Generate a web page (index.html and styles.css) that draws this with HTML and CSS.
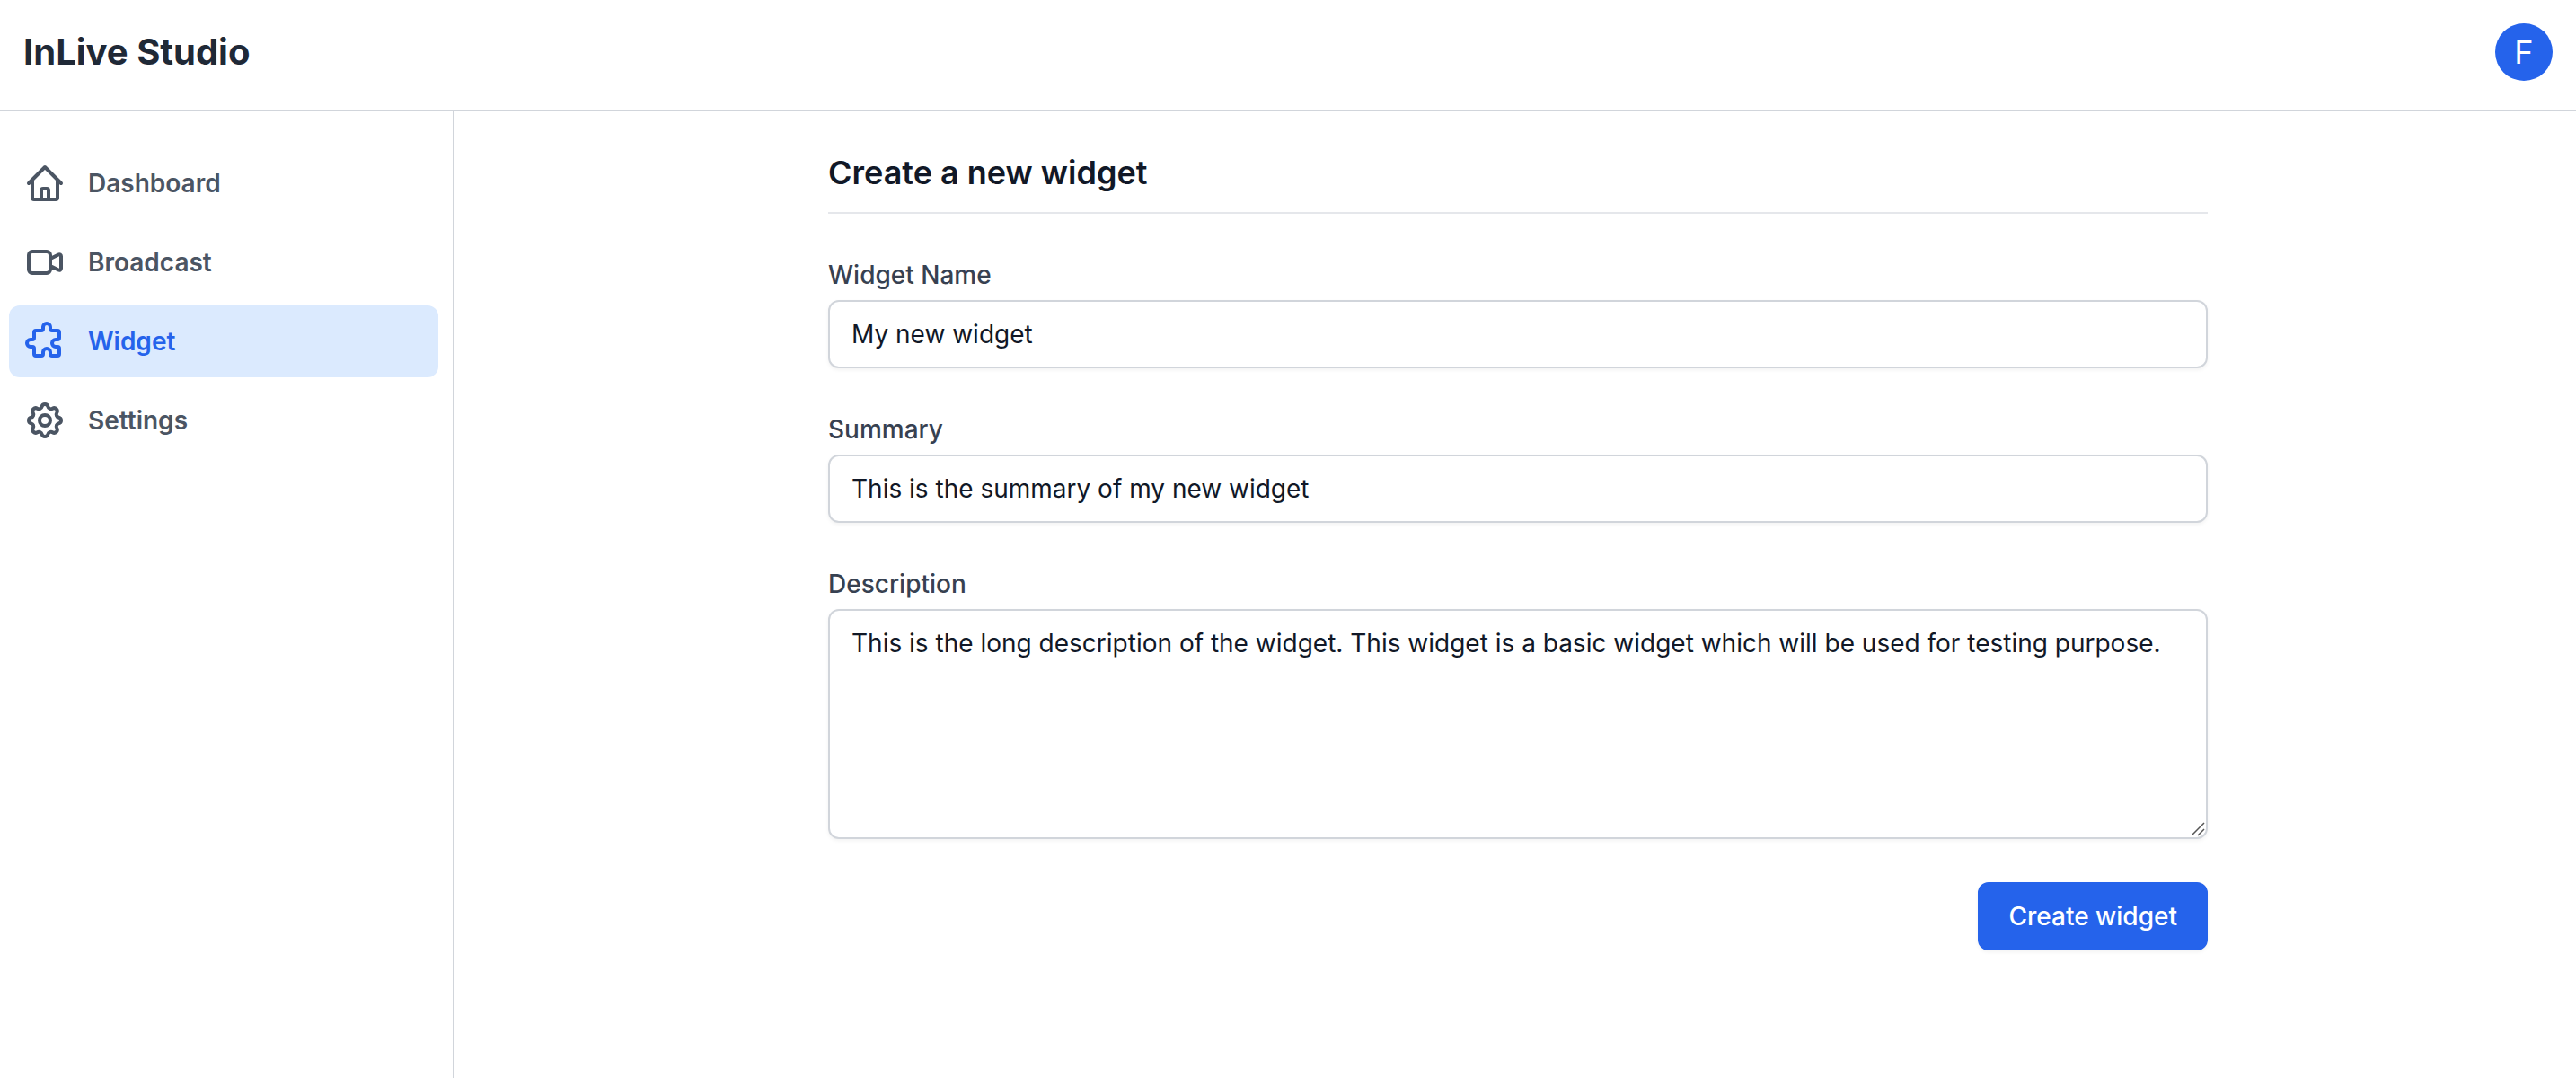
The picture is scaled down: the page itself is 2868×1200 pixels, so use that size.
FILE: index.html
```html
<!DOCTYPE html>
<html lang="en">
<head>
  <meta charset="utf-8">
  <meta name="viewport" content="width=device-width, initial-scale=1">
  <title>InLive Studio</title>
  <link rel="stylesheet" href="styles.css">
</head>
<body>
  <header class="topbar">
    <h1 class="brand">InLive Studio</h1>
    <button class="avatar" type="button" aria-label="Account menu">F</button>
  </header>
  <div class="layout">
    <nav class="sidebar" aria-label="Main">
      <a class="nav-item" href="#dashboard">
        <svg class="icon" viewBox="0 0 24 24" aria-hidden="true"><path d="M3 12l2-2m0 0l7-7 7 7M5 10v10a1 1 0 001 1h3m10-11l2 2m-2-2v10a1 1 0 01-1 1h-3m-6 0a1 1 0 001-1v-4a1 1 0 011-1h2a1 1 0 011 1v4a1 1 0 001 1m-6 0h6"/></svg>
        Dashboard
      </a>
      <a class="nav-item" href="#broadcast">
        <svg class="icon" viewBox="0 0 24 24" aria-hidden="true"><path d="M15 10l4.553-2.276A1 1 0 0121 8.618v6.764a1 1 0 01-1.447.894L15 14M5 18h8a2 2 0 002-2V8a2 2 0 00-2-2H5a2 2 0 00-2 2v8a2 2 0 002 2z"/></svg>
        Broadcast
      </a>
      <a class="nav-item nav-item-active" href="#widget" aria-current="page">
        <svg class="icon" viewBox="0 0 24 24" aria-hidden="true"><path d="M11 4a2 2 0 114 0v1a1 1 0 001 1h3a1 1 0 011 1v3a1 1 0 01-1 1h-1a2 2 0 100 4h1a1 1 0 011 1v3a1 1 0 01-1 1h-3a1 1 0 01-1-1v-1a2 2 0 10-4 0v1a1 1 0 01-1 1H7a1 1 0 01-1-1v-3a1 1 0 00-1-1H4a2 2 0 110-4h1a1 1 0 001-1V7a1 1 0 011-1h3a1 1 0 001-1V4z"/></svg>
        Widget
      </a>
      <a class="nav-item" href="#settings">
        <svg class="icon" viewBox="0 0 24 24" aria-hidden="true"><path d="M10.325 4.317c.426-1.756 2.924-1.756 3.35 0a1.724 1.724 0 002.573 1.066c1.543-.94 3.31.826 2.37 2.37a1.724 1.724 0 001.065 2.572c1.756.426 1.756 2.924 0 3.35a1.724 1.724 0 00-1.066 2.573c.94 1.543-.826 3.31-2.37 2.37a1.724 1.724 0 00-2.572 1.065c-.426 1.756-2.924 1.756-3.35 0a1.724 1.724 0 00-2.573-1.066c-1.543.94-3.31-.826-2.37-2.37a1.724 1.724 0 00-1.065-2.572c-1.756-.426-1.756-2.924 0-3.35a1.724 1.724 0 001.066-2.573c-.94-1.543.826-3.31 2.37-2.37.996.608 2.296.07 2.572-1.065z"/><path d="M15 12a3 3 0 11-6 0 3 3 0 016 0z"/></svg>
        Settings
      </a>
    </nav>
    <main class="content">
      <form class="widget-form">
        <h2 class="form-title">Create a new widget</h2>
        <div class="field">
          <label class="label" for="name">Widget Name</label>
          <input class="control" id="name" name="name" type="text" value="My new widget">
        </div>
        <div class="field">
          <label class="label" for="summary">Summary</label>
          <input class="control" id="summary" name="summary" type="text" value="This is the summary of my new widget">
        </div>
        <div class="field">
          <label class="label" for="description">Description</label>
          <textarea class="control control-multiline" id="description" name="description" rows="5" spellcheck="false">This is the long description of the widget. This widget is a basic widget which will be used for testing purpose.</textarea>
        </div>
        <button class="submit" type="submit">Create widget</button>
      </form>
    </main>
  </div>
</body>
</html>
```
FILE: styles.css
```css
* {
  box-sizing: border-box;
}

body {
  display: flex;
  flex-direction: column;
  min-height: 100vh;
  margin: 0;
  background: #fff;
  color: #111827;
  font-family: Inter, "Liberation Sans", sans-serif;
  font-size: 28px;
  line-height: 40px;
}

h1,
h2 {
  margin: 0;
}

button,
input,
textarea {
  font: inherit;
}

.topbar {
  display: flex;
  align-items: center;
  justify-content: space-between;
  padding: 26px 26px 32px;
  border-bottom: 2px solid #d1d5db;
}

.brand {
  color: #1f2937;
  font-size: 40px;
  font-weight: 700;
  line-height: 56px;
}

.avatar {
  width: 64px;
  height: 64px;
  padding: 0;
  border: 0;
  border-radius: 50%;
  background: #2563eb;
  color: #fff;
  font-size: 36px;
}

.layout {
  display: flex;
  flex: 1;
  gap: 6px;
}

.sidebar {
  display: flex;
  flex: none;
  flex-direction: column;
  gap: 8px;
  width: 506px;
  padding: 40px 16px 40px 10px;
  border-right: 2px solid #d1d5db;
}

.nav-item {
  display: flex;
  align-items: center;
  gap: 24px;
  padding: 16px;
  border-radius: 12px;
  color: #4b5563;
  font-weight: 600;
  line-height: 48px;
  text-decoration: none;
}

.nav-item-active {
  background: #dbeafe;
  color: #2563eb;
}

.icon {
  width: 48px;
  height: 48px;
  fill: none;
  stroke: currentColor;
  stroke-width: 2;
  stroke-linecap: round;
  stroke-linejoin: round;
}

.content {
  flex: 1;
  min-width: 0;
  padding: 40px 32px;
}

.widget-form {
  display: flex;
  flex-direction: column;
  gap: 48px;
  max-width: 1536px;
  margin: 0 auto;
}

.form-title {
  padding-bottom: 16px;
  border-bottom: 2px solid #e5e7eb;
  font-size: 36px;
  font-weight: 600;
  line-height: 56px;
}

.field {
  display: flex;
  flex-direction: column;
  gap: 8px;
}

.label {
  color: #374151;
  font-weight: 500;
}

.control {
  display: block;
  width: 100%;
  padding: 16px 24px;
  border: 2px solid #d1d5db;
  border-radius: 12px;
  background: #fff;
  box-shadow: 0 2px 4px rgb(0 0 0 / 5%);
  color: #111827;
}

/* The resize grip is drawn larger than the browser's own. */
.control-multiline {
  min-height: 256px;
  background: #fff url("data:image/svg+xml,%3Csvg xmlns='http://www.w3.org/2000/svg' width='30' height='30' viewBox='0 0 30 30'%3E%3Cpath d='M14 28 28 14M21 28l7-7' stroke='%23555' stroke-width='1.5'/%3E%3C/svg%3E") no-repeat right bottom / 30px 30px;
  resize: vertical;
}

.control-multiline::-webkit-resizer {
  background: transparent;
}

.submit {
  align-self: flex-end;
  padding: 16px 32px;
  border: 2px solid #2563eb;
  border-radius: 12px;
  background: #2563eb;
  box-shadow: 0 2px 4px rgb(0 0 0 / 5%);
  color: #fff;
  font-weight: 500;
}
```
